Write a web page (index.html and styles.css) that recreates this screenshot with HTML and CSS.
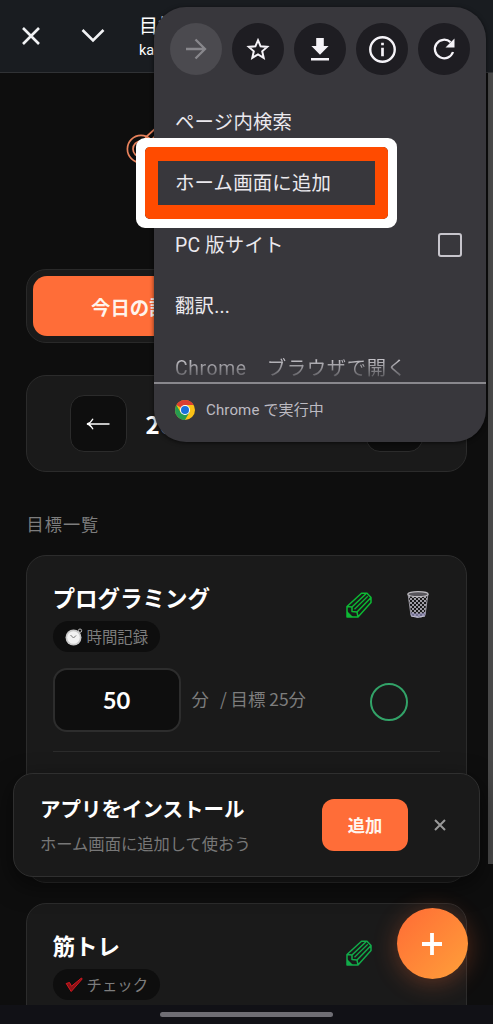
FILE: index.html
```html
<!DOCTYPE html>
<html lang="ja">
<head>
<meta charset="utf-8">
<title>目標</title>
<link rel="stylesheet" href="styles.css">
</head>
<body>
<svg class="defs" aria-hidden="true">
  <symbol id="pencil" viewBox="0 0 26 26"><path d="M1 25V14.5L15.5 1.2H21L25 5.5V10.5L12 25ZM1 14.5L6 15V19.5L11 20L12 25M6 15L20 1.8M11 20L24.6 6" fill="none" stroke="currentColor" stroke-width="1.5" stroke-linejoin="round"/><path d="M8.5 17.2L21.8 4.2" fill="none" stroke="currentColor" stroke-width="1.2"/><path d="M1 25V19L3.5 21.5L7 25Z" fill="currentColor"/></symbol>
</svg>
<div class="screen">
  <header class="topbar">
    <svg class="close" viewBox="0 0 20 20"><path d="M2 2L18 18M18 2L2 18"/></svg>
    <svg class="chevron" viewBox="0 0 24 16"><path d="M1.5 2L12 12.5L22.5 2"/></svg>
    <div class="site"><div class="site-title">目標</div><div class="site-url">kaizen</div></div>
  </header>
  <main class="page">
    <div class="hero"><svg viewBox="0 0 42 42"><circle cx="15" cy="24" r="13.6"/><circle cx="15" cy="24" r="8"/><circle cx="15" cy="24" r="3"/><path d="M14 21L21 11L30 3V10L17 24Z"/></svg></div>
    <div class="tabs"><div class="tab">今日の記録</div><div class="tab-rest"></div></div>
    <section class="date">
      <div class="nav-btn"><svg viewBox="0 0 24 12"><path d="M23.5 6H1M7 .8C5.5 3.5 3 5.5 1 6C3 6.5 5.5 8.5 7 11.2"/></svg></div>
      <div class="date-text">2026年</div>
      <div class="nav-btn"></div>
    </section>
    <h2 class="label">目標一覧</h2>
    <article class="goal goal-time">
      <div class="goal-head">
        <div><h3>プログラミング</h3>
          <div class="tag"><svg class="clock" viewBox="0 0 18 18"><circle cx="15" cy="2.7" r="1.7" fill="none" stroke="#bbb"/><circle cx="8.5" cy="9.5" r="8" fill="#c9c9c9"/><circle cx="8.5" cy="9.5" r="6.3" fill="#f2f2f2"/><path d="M5.5 7L8.5 10L11 7.5" fill="none" stroke="#777" stroke-width="1"/></svg><span>時間記録</span></div>
        </div>
        <div class="actions">
          <svg class="pencil"><use href="#pencil"/></svg>
          <svg class="trash" viewBox="0 0 22 27"><defs><pattern id="mesh" width="4" height="4" patternUnits="userSpaceOnUse"><path d="M0 0L4 4M4 0L0 4" stroke="#aeabb4" stroke-width=".9"/></pattern></defs><path d="M1 3.5L4 25Q11 28 18 25L21 3.5Z" fill="url(#mesh)"/><path d="M1.2 4L4 24.5M20.8 4L18 24.5" stroke="#96939c" fill="none"/><path d="M3.5 21Q11 24 18.5 21L18 25Q11 28 4 25Z" fill="#9591bd" opacity=".7"/><path d="M4 25Q11 27.5 18 25" fill="none" stroke="#c5c3d3"/><ellipse cx="11" cy="3.2" rx="10.2" ry="2.5" fill="#56545a" stroke="#bdbbc0" stroke-width="1.2"/></svg>
        </div>
      </div>
      <div class="entry"><div class="minutes">50</div><span class="unit">分</span><span class="target">/ 目標 25分</span><span class="ring"></span></div>
      <div class="rule"></div>
    </article>
    <article class="goal">
      <div class="goal-head">
        <div><h3>筋トレ</h3>
          <div class="tag"><svg class="check" viewBox="0 0 18 16"><path d="M1.2 6.5L4.5 5.5L6.5 9.2L16.5 1L17.2 2L6.2 14.5Z" fill="#8a1216" stroke="#d71920" stroke-width="1"/></svg><span>チェック</span></div>
        </div>
        <div class="actions"><svg class="pencil teal"><use href="#pencil"/></svg><span class="trash"></span></div>
      </div>
    </article>
  </main>
  <div class="scrollbar"></div>
  <aside class="install">
    <div class="install-copy"><strong>アプリをインストール</strong><p>ホーム画面に追加して使おう</p></div>
    <button class="add">追加</button>
    <svg class="dismiss" viewBox="0 0 12 12"><path d="M1 1L11 11M11 1L1 11"/></svg>
  </aside>
  <div class="fab"><svg viewBox="0 0 22 22"><path d="M11 0V22M1 11H21"/></svg></div>
  <div class="gesture"><i></i></div>
  <nav class="menu">
    <div class="menu-icons">
      <div class="ic off"><svg viewBox="0 0 24 24"><path class="line" d="M2 12H21M11.5 2.5L21 12L11.5 21.5"/></svg></div>
      <div class="ic"><svg class="star" viewBox="0 0 24 24"><path class="line" d="M12 3.2L14.6 9.3L21.2 9.9L16.2 14.3L17.7 20.8L12 17.3L6.3 20.8L7.8 14.3L2.8 9.9L9.4 9.3Z"/></svg></div>
      <div class="ic"><svg viewBox="0 0 24 24"><path d="M8.2 1H15.8V9H20.6L12 17.7L3.4 9H8.2ZM3 21H21V23.5H3Z"/></svg></div>
      <div class="ic"><svg class="info" viewBox="0 0 26 26"><circle class="line" cx="13" cy="13" r="11.8"/><path d="M11.7 6.4H14.3V9H11.7ZM11.7 11.3H14.3V19.5H11.7Z"/></svg></div>
      <div class="ic"><svg viewBox="0 0 24 24"><path class="line" d="M21 15A9.3 9.3 0 1 1 18.5 5.2"/><path d="M22.5 1.5V10.5H13.5Z"/></svg></div>
    </div>
    <div class="items">
      <div class="item">ページ内検索</div>
      <div class="item">ホーム画面に追加</div>
      <div class="item"><span>PC 版サイト</span><span class="box"></span></div>
      <div class="item">翻訳...</div>
      <div class="item fade">Chrome　ブラウザで開く</div>
    </div>
    <div class="running"><svg viewBox="0 0 20 20"><circle cx="10" cy="10" r="10" fill="#fbc116"/><path d="M10 10L1.34 5A10 10 0 0 1 18.66 5H10Z" fill="#db3f32"/><path d="M1.34 5A10 10 0 0 0 10 20L14.33 12.5L10 10L5.67 12.5Z" fill="#279b50"/><circle cx="10" cy="10" r="5" fill="#fff"/><circle cx="10" cy="10" r="4" fill="#1a70dc"/></svg><span>Chrome で実行中</span></div>
  </nav>
  <div class="highlight"><div class="highlight-inner"></div></div>
</div>
</body>
</html>
```

FILE: styles.css
```css
* { box-sizing: border-box; }
body { margin: 0; background: #0e0e0e; font-family: "Noto Sans CJK JP", sans-serif; color: #fff; }
h2, h3, p { margin: 0; }
svg { display: block; flex: none; }
.defs { position: absolute; width: 0; height: 0; }
.screen { position: relative; width: 493px; height: 1024px; overflow: hidden; background: #0e0e0e; }

.topbar { height: 73px; background: #191c20; border-bottom: 1px solid #303235; display: flex; align-items: flex-start; padding-left: 21px; }
.topbar path { fill: none; stroke: #f1f2f4; stroke-width: 2.6; }
.close { width: 20px; height: 20px; margin-top: 26px; }
.chevron { width: 24px; height: 16px; margin: 28px 0 0 40px; }
.site { margin: 12px 0 0 34px; }
.site-title { font-size: 19px; line-height: 25px; font-weight: 400; }
.site-url { font: 14.5px/24px Roboto, sans-serif; padding-top: 2px; }

.page { padding: 52px 26px 0 25.5px; display: flex; flex-direction: column; }
.hero { height: 144px; padding-left: 100px; }
.hero svg { width: 42px; height: 42px; }
.hero svg * { fill: none; stroke: #e8825c; stroke-width: 1.7; }
.tabs { height: 74px; border: 1px solid #292929; border-radius: 20px; background: #1a1a1a; padding: 6px; display: flex; }
.tab { width: 214px; border-radius: 14px; background: #ff6d38; display: flex; align-items: center; justify-content: center; font-size: 19.4px; font-weight: 700; color: #fff4ec; }
.tab-rest { flex: 1; }
.date { height: 97px; margin-top: 32px; border: 1px solid #2b2b2b; border-radius: 20px; background: #1a1a1a; display: flex; align-items: center; justify-content: space-between; padding: 0 43px; }
.nav-btn { width: 57px; height: 57px; border: 1px solid #2b2b2b; border-radius: 14px; background: #0e0e0e; display: grid; place-items: center; }
.nav-btn svg { width: 24px; height: 12px; }
.nav-btn path { fill: none; stroke: #fff; stroke-width: 1.3; }
.date-text { font-size: 24px; font-weight: 700; flex: 1; padding-left: 19px; }
.label { font-size: 17.2px; line-height: 26px; margin: 39px 0 18px 1px; font-weight: 400; letter-spacing: 1px; color: #7d7d7d; }

.goal { height: 328px; border: 1px solid #2c2c2c; border-radius: 20px; background: #1a1a1a; padding: 24px 26px; flex: none; }
.goal-time { margin-bottom: 20px; }
.goal-head { display: flex; justify-content: space-between; }
h3 { font-size: 22.5px; line-height: 34px; font-weight: 700; }
.tag { display: inline-flex; align-items: center; height: 31px; margin-top: 7px; border-radius: 16px; background: #0e0e0e; padding: 0 12px; gap: 4px; font-size: 15.4px; line-height: 30px; color: #7d7d7d; }
.tag span { padding-bottom: 2px; }
.clock, .check { width: 18px; height: 18px; }
.actions { display: flex; align-items: flex-start; gap: 35px; padding: 11px 11px 0 0; }
.pencil { width: 26px; height: 26px; margin-top: 1px; color: #0db934; }
.teal { color: #12ab4a; }
.trash { width: 22px; height: 27px; }
.entry { display: flex; align-items: center; margin-top: 16px; height: 64px; color: #7d7d7d; font-size: 17.4px; }
.minutes { width: 128px; height: 64px; border: 2.5px solid #2d2d2d; border-radius: 14px; background: #0e0e0e; display: grid; place-items: center; color: #fff; font: 700 23.7px/28px Lato, sans-serif; }
.unit { margin: -3px 0 0 11px; }
.target { margin: -3px 0 0 11px; }
.ring { width: 38px; height: 38px; border: 2px solid #32a368; border-radius: 50%; margin: 3px 32px 0 auto; }
.rule { height: 1px; background: #2b2b2b; margin-top: 19px; }

.scrollbar { position: absolute; right: 0; top: 73px; width: 5px; height: 791px; background: #484848; }
.install { position: absolute; left: 13px; top: 773px; width: 467px; height: 104px; background: #1a1a1a; border: 1px solid #2f2f2f; border-radius: 20px; padding: 0 33px 0 26px; display: flex; align-items: center; box-shadow: 0 8px 24px #0008; }
.install-copy { flex: 1; white-space: nowrap; margin-top: -2px; }
.install strong { display: block; font-size: 20.5px; line-height: 31px; }
.install p { font-size: 16.3px; line-height: 24px; margin-top: 7px; color: #777; }
.add { width: 86px; height: 52px; border: 0; border-radius: 12px; background: #ff6d38; color: #fff6ef; font: 700 17.3px "Noto Sans CJK JP", sans-serif; padding: 0 0 2px; }
.dismiss { width: 12px; height: 12px; margin-left: 26px; }
.dismiss path { stroke: #999; stroke-width: 2; }
.fab { position: absolute; left: 396.5px; top: 908px; width: 71px; height: 71px; border-radius: 50%; background: linear-gradient(135deg, #ff6b35, #ffa03a); display: grid; place-items: center; box-shadow: 0 4px 24px #ff6b3550; }
.fab svg { width: 22px; height: 22px; }
.fab path { stroke: #fff; stroke-width: 3.8; }
.gesture { position: absolute; left: 0; bottom: 0; width: 493px; height: 19px; background: #111116; display: flex; justify-content: center; padding-top: 7px; }
.gesture i { width: 173px; height: 5px; border-radius: 3px; background: #6f6e74; }

.menu { position: absolute; left: 154px; top: 7px; width: 332px; height: 435px; background: #38373c; border-radius: 32px; overflow: hidden; box-shadow: 0 1px 4px #0009; }
.menu-icons { display: flex; gap: 10px; padding: 16px 0 0 16px; height: 83px; }
.ic { width: 52px; height: 52px; border-radius: 50%; background: #1e1d22; display: grid; place-items: center; }
.ic svg { width: 24px; height: 24px; fill: #f5f3f8; color: #f5f3f8; }
.ic .info { width: 27px; height: 27px; }
.ic .line { fill: none; stroke: currentColor; stroke-width: 2.3; }
.ic .star .line { stroke-width: 2; }
.ic.off { background: #4b4a4f; }
.ic.off svg { color: #88878c; }
.items { height: 292px; padding-top: 2px; overflow: hidden; }
.item { height: 61.5px; display: flex; align-items: center; justify-content: space-between; padding: 0 24px 0 21px; font: 400 19.4px/28px Roboto, "Noto Sans CJK JP", sans-serif; letter-spacing: .2px; color: #ebe9ee; }
.box { width: 24px; height: 24px; border: 2.5px solid #c7c5cc; border-radius: 3px; margin-top: -2px; }
.fade { width: max-content; letter-spacing: .62px; background: linear-gradient(#d4d2d8 30%, #68676c 60%, #38373c 69%); background-clip: text; -webkit-background-clip: text; color: transparent; }
.running { height: 60px; border-top: 2px solid #89888d; display: flex; align-items: center; padding: 0 0 7px 21px; gap: 11px; font: 400 15px/24px Roboto, "Noto Sans CJK JP", sans-serif; letter-spacing: .15px; color: #bdbbc2; }
.running svg { width: 20px; height: 20px; }
.highlight { position: absolute; left: 136px; top: 138px; width: 261px; height: 90px; border: 9px solid #fff; border-radius: 9px; }
.highlight-inner { height: 100%; border: 14px solid #ff4b00; border-width: 14px 13px; border-radius: 5px; box-shadow: 0 0 0 3px #fff; }
```
